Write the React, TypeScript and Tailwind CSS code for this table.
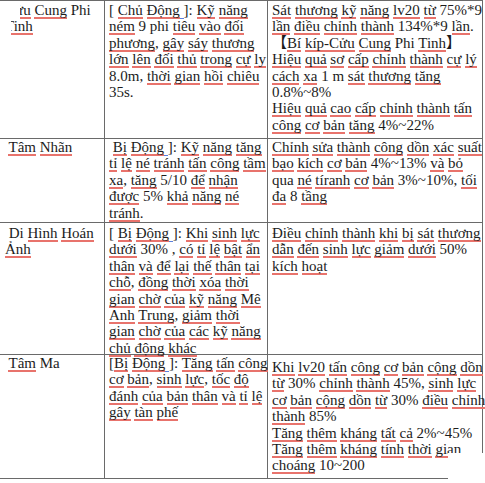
import React from "react";

// "^" in front of a word = no red squiggle under it
type Row = { h: string; pt: string[]; cells: string[][] };

const ROWS: Row[] = [
  {
    h: "h-[138px]",
    pt: ["pt-[1px]", "pt-[1px]", "pt-[1px]"],
    cells: [
      ["Cửu Cung ^Phi", "Tinh"],
      [
        "[ Chủ Động ]: Kỹ năng",
        "ném 9 ^phi tiêu vào đối",
        "phương, gây sáy thương",
        "lớn lên đối thủ trong cự ly",
        "^8.0m, thời gian hồi chiêu",
        "^35s.",
      ],
      [
        "Sát thương kỹ năng lv20 từ 75%*9",
        "lần điều chỉnh thành 134%*9 lần.",
        "【Bí kíp-Cửu Cung ^Phi Tinh】",
        "Hiệu quả sơ cấp chỉnh thành cự lý",
        "cách xa 1 ^m sát thương tăng",
        "0.8%~8%",
        "Hiệu quả cao cấp chỉnh thành tấn",
        "công cơ bản tăng 4%~22%",
      ],
    ],
  },
  {
    h: "h-[84px]",
    pt: ["pt-0", "pt-0", "pt-0"],
    cells: [
      [" Tâm Nhãn"],
      [
        " Bị Động ]: Kỹ năng tăng",
        "tỉ lệ né tránh tấn công tầm",
        "xa, tăng 5/10 để nhận",
        "được 5% khả năng né",
        "tránh.",
      ],
      [
        "Chỉnh sửa thành công dồn xác suất",
        "bạo kích cơ bản 4%~13% và bỏ",
        "^qua né tíranh cơ bản 3%~10%, tối",
        "đa 8 tầng",
      ],
    ],
  },
  {
    h: "h-[132px]",
    pt: ["pt-[2px]", "pt-[2px]", "pt-[2px]"],
    cells: [
      [" ^Di Hình Hoán", "Ảnh"],
      [
        "[ Bị Động ]: Khi sinh lực",
        "dưới 30% , có tỉ lệ bật ẩn",
        "thân và để lại thế thân tại",
        "chỗ, đồng thời xóa thời",
        "gian chờ của kỹ năng Mê",
        "Anh Trung, giảm thời",
        "gian chờ của các kỹ năng",
        "chủ động khác",
      ],
      [
        "Điều chỉnh thành khi bị sát thương",
        "dẫn đến sinh lực giảm dưới 50%",
        "kích hoạt",
      ],
    ],
  },
  {
    h: "h-[124px]",
    pt: ["pt-0", "pt-0", "pt-[4px]"],
    cells: [
      [" Tâm ^Ma"],
      [
        "[Bị Động ]: Tăng tấn công",
        "cơ bản, sinh lực, tốc độ",
        "đánh của bản thân và tỉ lệ",
        "gây tàn phế",
      ],
      [
        "Khi lv20 tấn công cơ bản cộng dồn",
        "từ 30% chỉnh thành 45%, sinh lực",
        "cơ bản cộng dồn từ 30% điều chỉnh",
        "thành 85%",
        "Tăng thêm kháng tất cả 2%~45%",
        "Tăng thêm kháng tính thời gian",
        "choáng 10~200",
      ],
    ],
  },
];

// small red zigzag like a word processor's spell check mark
const squiggle =
  "bg-[linear-gradient(45deg,transparent_38%,#e8736c_38%,#e8736c_62%,transparent_62%),linear-gradient(-45deg,transparent_38%,#e8736c_38%,#e8736c_62%,transparent_62%)] bg-[length:3px_2px] bg-repeat-x bg-[position:0_100%] pb-[1px]";
const grammar =
  "bg-[linear-gradient(#5a80dc,#5a80dc)] bg-[length:100%_1px] bg-no-repeat bg-[position:0_100%] pb-[1px]";

function Words({ text }: { text: string }) {
  const parts = text.split(/(\s+)/);
  return (
    <>
      {parts.map((p, i) => {
        if (p === "") return null;
        if (/^\s+$/.test(p)) {
          const next = parts[i + 1] ?? "";
          if (next.startsWith("]") && i > 0)
            return (
              <span key={i} className={grammar}>
                {p}
              </span>
            );
          return <span key={i}>{p}</span>;
        }
        if (p.startsWith("^")) return <span key={i}>{p.slice(1)}</span>;
        if (!/\p{L}/u.test(p)) return <span key={i}>{p}</span>;
        const m = p.match(/^([\[【]*)(.*?)([,.:;\]】]*)$/);
        const pre = m ? m[1] : "";
        const core = m ? m[2] : p;
        const post = m ? m[3] : "";
        return (
          <span key={i}>
            {pre}
            <span className={squiggle}>{core}</span>
            {post}
          </span>
        );
      })}
    </>
  );
}

const widths = ["w-[105px] pl-[5px]", "w-[163px] pl-[4px]", "w-[215px] pl-[4px]"];

export default function App() {
  return (
    <div className="relative h-[483px] w-[485px] overflow-hidden bg-white font-['Liberation_Serif','Times_New_Roman','Noto_Sans_CJK_SC',serif] text-[15px] leading-[16.4px] text-[#1c1c1c]">
      <div className="w-[483px] border-t border-[#6a6a6a]">
        {ROWS.map((r, ri) => (
          <div key={ri} className={`flex border-b border-[#6a6a6a] ${r.h}`}>
            {r.cells.map((lines, ci) => (
              <div key={ci} className={`relative shrink-0 border-r border-[#6a6a6a] ${widths[ci]} ${r.pt[ci]}`}>
                {lines.map((l, li) => (
                  <div key={li} className="whitespace-pre">
                    <Words text={l} />
                  </div>
                ))}
                {ri === 0 && ci === 0 && (
                  <>
                    <div className="absolute left-0 top-0 h-[19px] w-[20px] bg-white" />
                    <div className="absolute left-0 top-[19px] h-[18px] w-[11px] bg-white" />
                  </>
                )}
              </div>
            ))}
          </div>
        ))}
      </div>
      <div className="absolute left-[448px] top-[453px] h-[30px] w-[37px] bg-white" />
    </div>
  );
}
